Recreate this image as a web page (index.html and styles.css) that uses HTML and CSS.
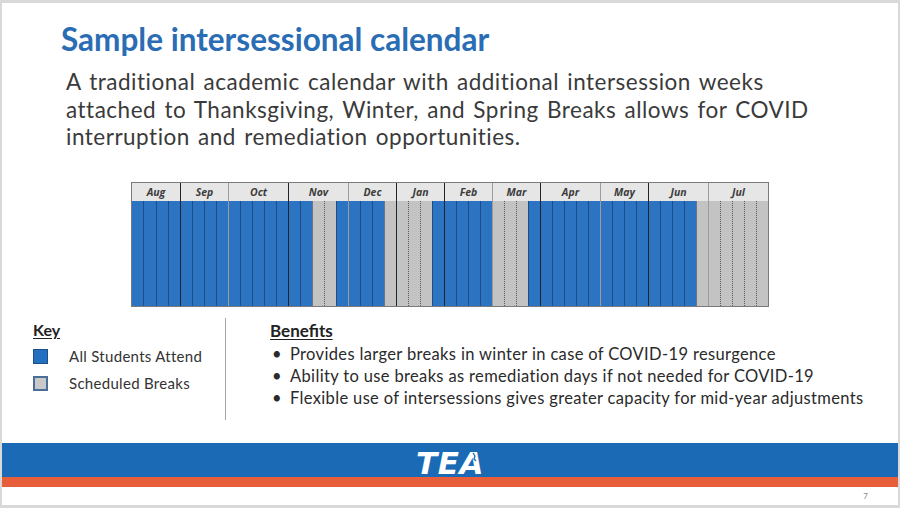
FILE: index.html
```html
<!DOCTYPE html>
<html lang="en">
<head>
<meta charset="utf-8">
<title>Sample intersessional calendar</title>
<link rel="stylesheet" href="styles.css">
</head>
<body>
<div class="slide">
  <h1 class="title">Sample intersessional calendar</h1>
  <p class="intro">A traditional academic calendar with additional intersession weeks<br>attached to Thanksgiving, Winter, and Spring Breaks allows for COVID<br>interruption and remediation opportunities.</p>

  <div class="cal">
    <div class="month m4 first"><div class="mh">Aug</div><div class="weeks"><i class="w b"></i><i class="w b"></i><i class="w b"></i><i class="w b"></i></div></div>
    <div class="month m4 dk"><div class="mh">Sep</div><div class="weeks"><i class="w b"></i><i class="w b"></i><i class="w b"></i><i class="w b"></i></div></div>
    <div class="month m5 lt"><div class="mh">Oct</div><div class="weeks"><i class="w b"></i><i class="w b"></i><i class="w b"></i><i class="w b"></i><i class="w b"></i></div></div>
    <div class="month m5 dk"><div class="mh">Nov</div><div class="weeks"><i class="w b"></i><i class="w b"></i><i class="w g"></i><i class="w g"></i><i class="w b"></i></div></div>
    <div class="month m4 lt"><div class="mh">Dec</div><div class="weeks"><i class="w b"></i><i class="w b"></i><i class="w b"></i><i class="w g"></i></div></div>
    <div class="month m4 dk"><div class="mh">Jan</div><div class="weeks"><i class="w g"></i><i class="w g"></i><i class="w g"></i><i class="w b"></i></div></div>
    <div class="month m4 dk"><div class="mh">Feb</div><div class="weeks"><i class="w b"></i><i class="w b"></i><i class="w b"></i><i class="w b"></i></div></div>
    <div class="month m4 lt"><div class="mh">Mar</div><div class="weeks"><i class="w g"></i><i class="w g"></i><i class="w g"></i><i class="w b"></i></div></div>
    <div class="month m5 dk"><div class="mh">Apr</div><div class="weeks"><i class="w b"></i><i class="w b"></i><i class="w b"></i><i class="w b"></i><i class="w b"></i></div></div>
    <div class="month m4 lt"><div class="mh">May</div><div class="weeks"><i class="w b"></i><i class="w b"></i><i class="w b"></i><i class="w b"></i></div></div>
    <div class="month m5 dk"><div class="mh">Jun</div><div class="weeks"><i class="w b"></i><i class="w b"></i><i class="w b"></i><i class="w b"></i><i class="w g"></i></div></div>
    <div class="month m5 lt"><div class="mh">Jul</div><div class="weeks"><i class="w g"></i><i class="w g"></i><i class="w g"></i><i class="w g"></i><i class="w g"></i></div></div>
  </div>

  <div class="lower">
    <div class="key">
      <div class="key-title">Key</div>
      <div class="key-row"><span class="sw sw-blue"></span><span>All Students Attend</span></div>
      <div class="key-row"><span class="sw sw-gray"></span><span>Scheduled Breaks</span></div>
    </div>
    <div class="divider"></div>
    <div class="benefits">
      <div class="ben-title">Benefits</div>
      <ul class="ben-list">
        <li>Provides larger breaks in winter in case of COVID-19 resurgence</li>
        <li>Ability to use breaks as remediation days if not needed for COVID-19</li>
        <li>Flexible use of intersessions gives greater capacity for mid-year adjustments</li>
      </ul>
    </div>
  </div>

  <div class="footer">
    <div class="band-blue">
      <span class="logo">TEA<svg class="logo-mark" width="10" height="10" viewBox="0 0 10 10"><path d="M3 1 L5 4 L4 7 L6 9" fill="none" stroke="#1b6ab5" stroke-width="1.3"/></svg></span>
    </div>
    <div class="band-orange"></div>
    <div class="pnum">7</div>
  </div>
</div>
</body>
</html>
```

FILE: styles.css
```css
body {
  margin: 0;
  background: #ffffff;
}

.slide {
  width: 900px;
  height: 508px;
  box-sizing: border-box;
  border: 2px solid #d9d9d9;
  border-top-width: 3px;
  border-bottom-width: 3px;
  display: flex;
  flex-direction: column;
  background: #ffffff;
  font-family: Lato, "Open Sans", sans-serif;
  color: #333333;
  overflow: hidden;
}

.title {
  margin: 19px 0 0 59px;
  font-family: Lato, "Open Sans", sans-serif;
  font-weight: 700;
  font-size: 31.5px;
  line-height: 34px;
  color: #2a6db4;
}

.intro {
  margin: 12px 0 0 64px;
  font-size: 22.5px;
  line-height: 27.5px;
  letter-spacing: 0.5px;
  word-spacing: 2px;
  color: #3a3a3a;
  white-space: nowrap;
}

/* calendar */
.cal {
  display: flex;
  margin: 31px 0 0 129px;
  width: 636px;
  border: 1px solid #7a7a7a;
  align-self: flex-start;
}

.month {
  display: flex;
  flex-direction: column;
  box-sizing: border-box;
}
.m4 { width: 48px; }
.m5 { width: 60px; }
.month.dk { border-left: 1px solid #1e2430; }
.month.lt { border-left: 1px solid #9c9c9c; }

.mh {
  height: 18px;
  line-height: 18px;
  background: #e6e6e6;
  text-align: center;
  font-family: "Open Sans", Lato, sans-serif;
  font-style: italic;
  font-weight: 700;
  font-size: 10.5px;
  color: #3c3c3c;
}

.weeks {
  display: flex;
  height: 105px;
}

.w {
  flex: 1;
  box-sizing: border-box;
}
.w + .w { border-left: 1px solid rgba(16, 40, 80, 0.5); }
.w.b { background: #2c74c2; }
.w.g { background: #c3c3c3; }
.w.g + .w.g { border-left: 1px dotted #5a5a5a; }

/* lower */
.lower {
  display: flex;
  margin-top: 11px;
  height: 102px;
}

.key {
  width: 192px;
  padding: 2px 0 0 31px;
  display: flex;
  flex-direction: column;
}

.key-title {
  font-weight: 700;
  font-size: 16px;
  line-height: 20px;
  text-decoration: underline;
  text-underline-offset: 2px;
  color: #222222;
}

.key-row {
  display: flex;
  align-items: center;
  height: 27px;
  gap: 21px;
  font-size: 15px;
  letter-spacing: 0.3px;
  color: #333333;
}
.key-title + .key-row { margin-top: 3px; }

.sw {
  width: 15px;
  height: 15px;
  box-sizing: border-box;
  flex: none;
}
.sw-blue { background: #2470c0; border: 1px solid #1d4f86; }
.sw-gray { background: #c9c9c9; border: 2px solid #4a6e98; }

.divider {
  width: 1px;
  background: #a5a5a5;
}

.benefits {
  padding: 3px 0 0 44px;
}

.ben-title {
  font-weight: 700;
  font-size: 17px;
  line-height: 20px;
  text-decoration: underline;
  text-underline-offset: 2px;
  color: #222222;
}

.ben-list {
  list-style: none;
  margin: 2px 0 0 0;
  padding: 0;
}

.ben-list li {
  position: relative;
  padding-left: 20px;
  font-size: 16.5px;
  letter-spacing: 0.35px;
  line-height: 22px;
  color: #2a2a2a;
  white-space: nowrap;
}

.ben-list li::before {
  content: "\2022";
  position: absolute;
  left: 2px;
  top: 0;
}

/* footer */
.footer {
  margin-top: auto;
}

.band-blue {
  height: 34px;
  box-sizing: border-box;
  padding-top: 7px;
  background: #1b6ab5;
  text-align: center;
}

.logo {
  position: relative;
  display: inline-block;
  font-family: "DejaVu Sans", sans-serif;
  font-weight: 700;
  font-style: italic;
  font-size: 31px;
  line-height: 27px;
  color: #ffffff;
  letter-spacing: 0.5px;
}

.logo-mark {
  position: absolute;
  right: 4px;
  top: 2px;
}

.band-orange {
  height: 10px;
  background: #e85e3b;
}

.pnum {
  height: 18px;
  box-sizing: border-box;
  padding: 3px 30px 0 0;
  text-align: right;
  font-size: 8px;
  line-height: 12px;
  color: #8a8a8a;
}
```
